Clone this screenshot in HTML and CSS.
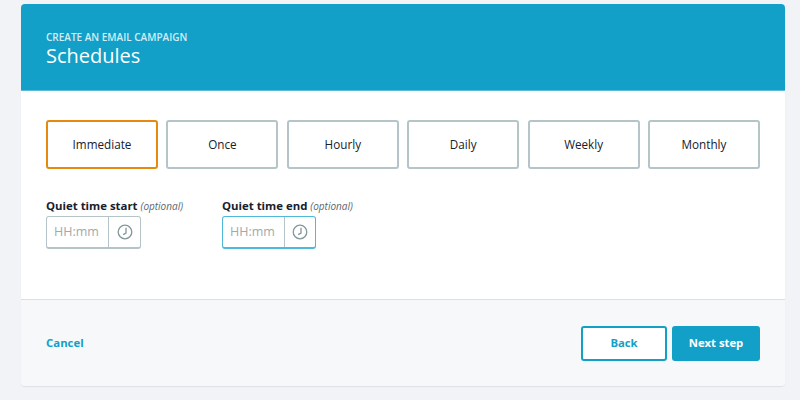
FILE: index.html
```html
<!DOCTYPE html>
<html lang="en">
<head>
    <meta charset="UTF-8">
    <title>Schedules</title>
    <link rel="stylesheet" href="styles.css">
</head>
<body>
    <div class="card">
        <div class="card-header">
            <div class="eyebrow">CREATE AN EMAIL CAMPAIGN</div>
            <h1>Schedules</h1>
        </div>

        <div class="card-body">
            <div class="options">
                <button class="option selected">Immediate</button>
                <button class="option">Once</button>
                <button class="option">Hourly</button>
                <button class="option">Daily</button>
                <button class="option">Weekly</button>
                <button class="option">Monthly</button>
            </div>

            <div class="fields">
                <div class="field">
                    <label>Quiet time start <em>(optional)</em></label>
                    <div class="time-input">
                        <span class="placeholder">HH:mm</span>
                        <span class="clock">
                            <svg width="16" height="16" viewBox="0 0 16 16"><circle cx="8" cy="8" r="6.8"/><path d="M9 3.8V9L6.2 10.6"/></svg>
                        </span>
                    </div>
                </div>
                <div class="field">
                    <label>Quiet time end <em>(optional)</em></label>
                    <div class="time-input focused">
                        <span class="placeholder">HH:mm</span>
                        <span class="clock">
                            <svg width="16" height="16" viewBox="0 0 16 16"><circle cx="8" cy="8" r="6.8"/><path d="M9 3.8V9L6.2 10.6"/></svg>
                        </span>
                    </div>
                </div>
            </div>
        </div>

        <div class="card-footer">
            <a href="#" class="cancel">Cancel</a>
            <div class="actions">
                <button class="btn btn-back">Back</button>
                <button class="btn btn-next">Next step</button>
            </div>
        </div>
    </div>
</body>
</html>
```

FILE: styles.css
```css
body {
    margin: 0;
    padding: 4px 15px 14px 21px;
    background-color: #f1f3f7;
    font-family: "Open Sans", "Noto Sans", sans-serif;
    color: #16202c;
}

.card {
    height: 382px;
    display: flex;
    flex-direction: column;
    border-radius: 4px;
    overflow: hidden;
    box-shadow: 0 1px 1px rgba(0, 0, 0, 0.08);
}

.card-header {
    height: 87px;
    box-sizing: border-box;
    padding: 27.5px 25px 0;
    background-color: #12a0c8;
    border-bottom: 1px solid #5cbcd8;
    color: white;
}

.eyebrow {
    font-size: 10px;
    font-weight: 600;
    line-height: 11px;
    color: #d3edf5;
}

h1 {
    margin: 0;
    font-size: 20px;
    font-weight: 500;
    line-height: 25px;
}

.card-body {
    flex-grow: 1;
    padding: 29px 25px 0;
    background-color: white;
}

.options {
    display: grid;
    grid-template-columns: repeat(6, 1fr);
    gap: 8.4px;
}

.option {
    height: 49px;
    padding: 0 0 1px;
    background-color: white;
    border: 2px solid #b4c4c8;
    border-radius: 3px;
    font-family: inherit;
    font-size: 11.7px;
    color: #16202c;
}

.option.selected {
    border-color: #e58a0e;
}

.fields {
    display: flex;
    gap: 40px;
    margin-top: 29px;
}

.field {
    width: 136px;
}

.field label {
    display: block;
    font-size: 11.4px;
    font-weight: 700;
    line-height: 16px;
    margin-bottom: 2px;
    white-space: nowrap;
}

.field em {
    font-size: 10px;
    font-weight: 400;
    color: #5b6770;
}

.time-input {
    display: flex;
    width: 95px;
    height: 33px;
    box-sizing: border-box;
    border: 1px solid #b4c4c8;
    border-bottom-width: 2px;
    border-radius: 3px;
}

.time-input.focused {
    width: 94px;
    border-color: #4fb9d9;
}

.placeholder {
    width: 61px;
    padding-left: 7px;
    box-sizing: border-box;
    font-size: 12.5px;
    line-height: 29px;
    color: #a2a9ad;
}

.clock {
    flex-grow: 1;
    display: flex;
    align-items: center;
    justify-content: center;
    border-left: 1px solid #b4c4c8;
}

.clock svg {
    fill: none;
    stroke: #83969b;
    stroke-width: 1.3;
}

.card-footer {
    height: 87px;
    box-sizing: border-box;
    padding: 0 25px;
    display: flex;
    align-items: center;
    justify-content: space-between;
    background-color: #f7f8fa;
    border-top: 1px solid #dcdfe3;
}

.cancel {
    margin-bottom: 2px;
    color: #12a0c8;
    font-size: 11.4px;
    font-weight: 700;
    text-decoration: none;
}

.actions {
    display: flex;
    gap: 5px;
}

.btn {
    height: 35px;
    padding: 0 0 1px;
    border: 2px solid #12a0c8;
    border-radius: 3px;
    font-family: inherit;
    font-size: 11.3px;
    font-weight: 700;
}

.btn-back {
    width: 86px;
    background-color: white;
    color: #12a0c8;
}

.btn-next {
    width: 88px;
    background-color: #12a0c8;
    color: white;
}
```
